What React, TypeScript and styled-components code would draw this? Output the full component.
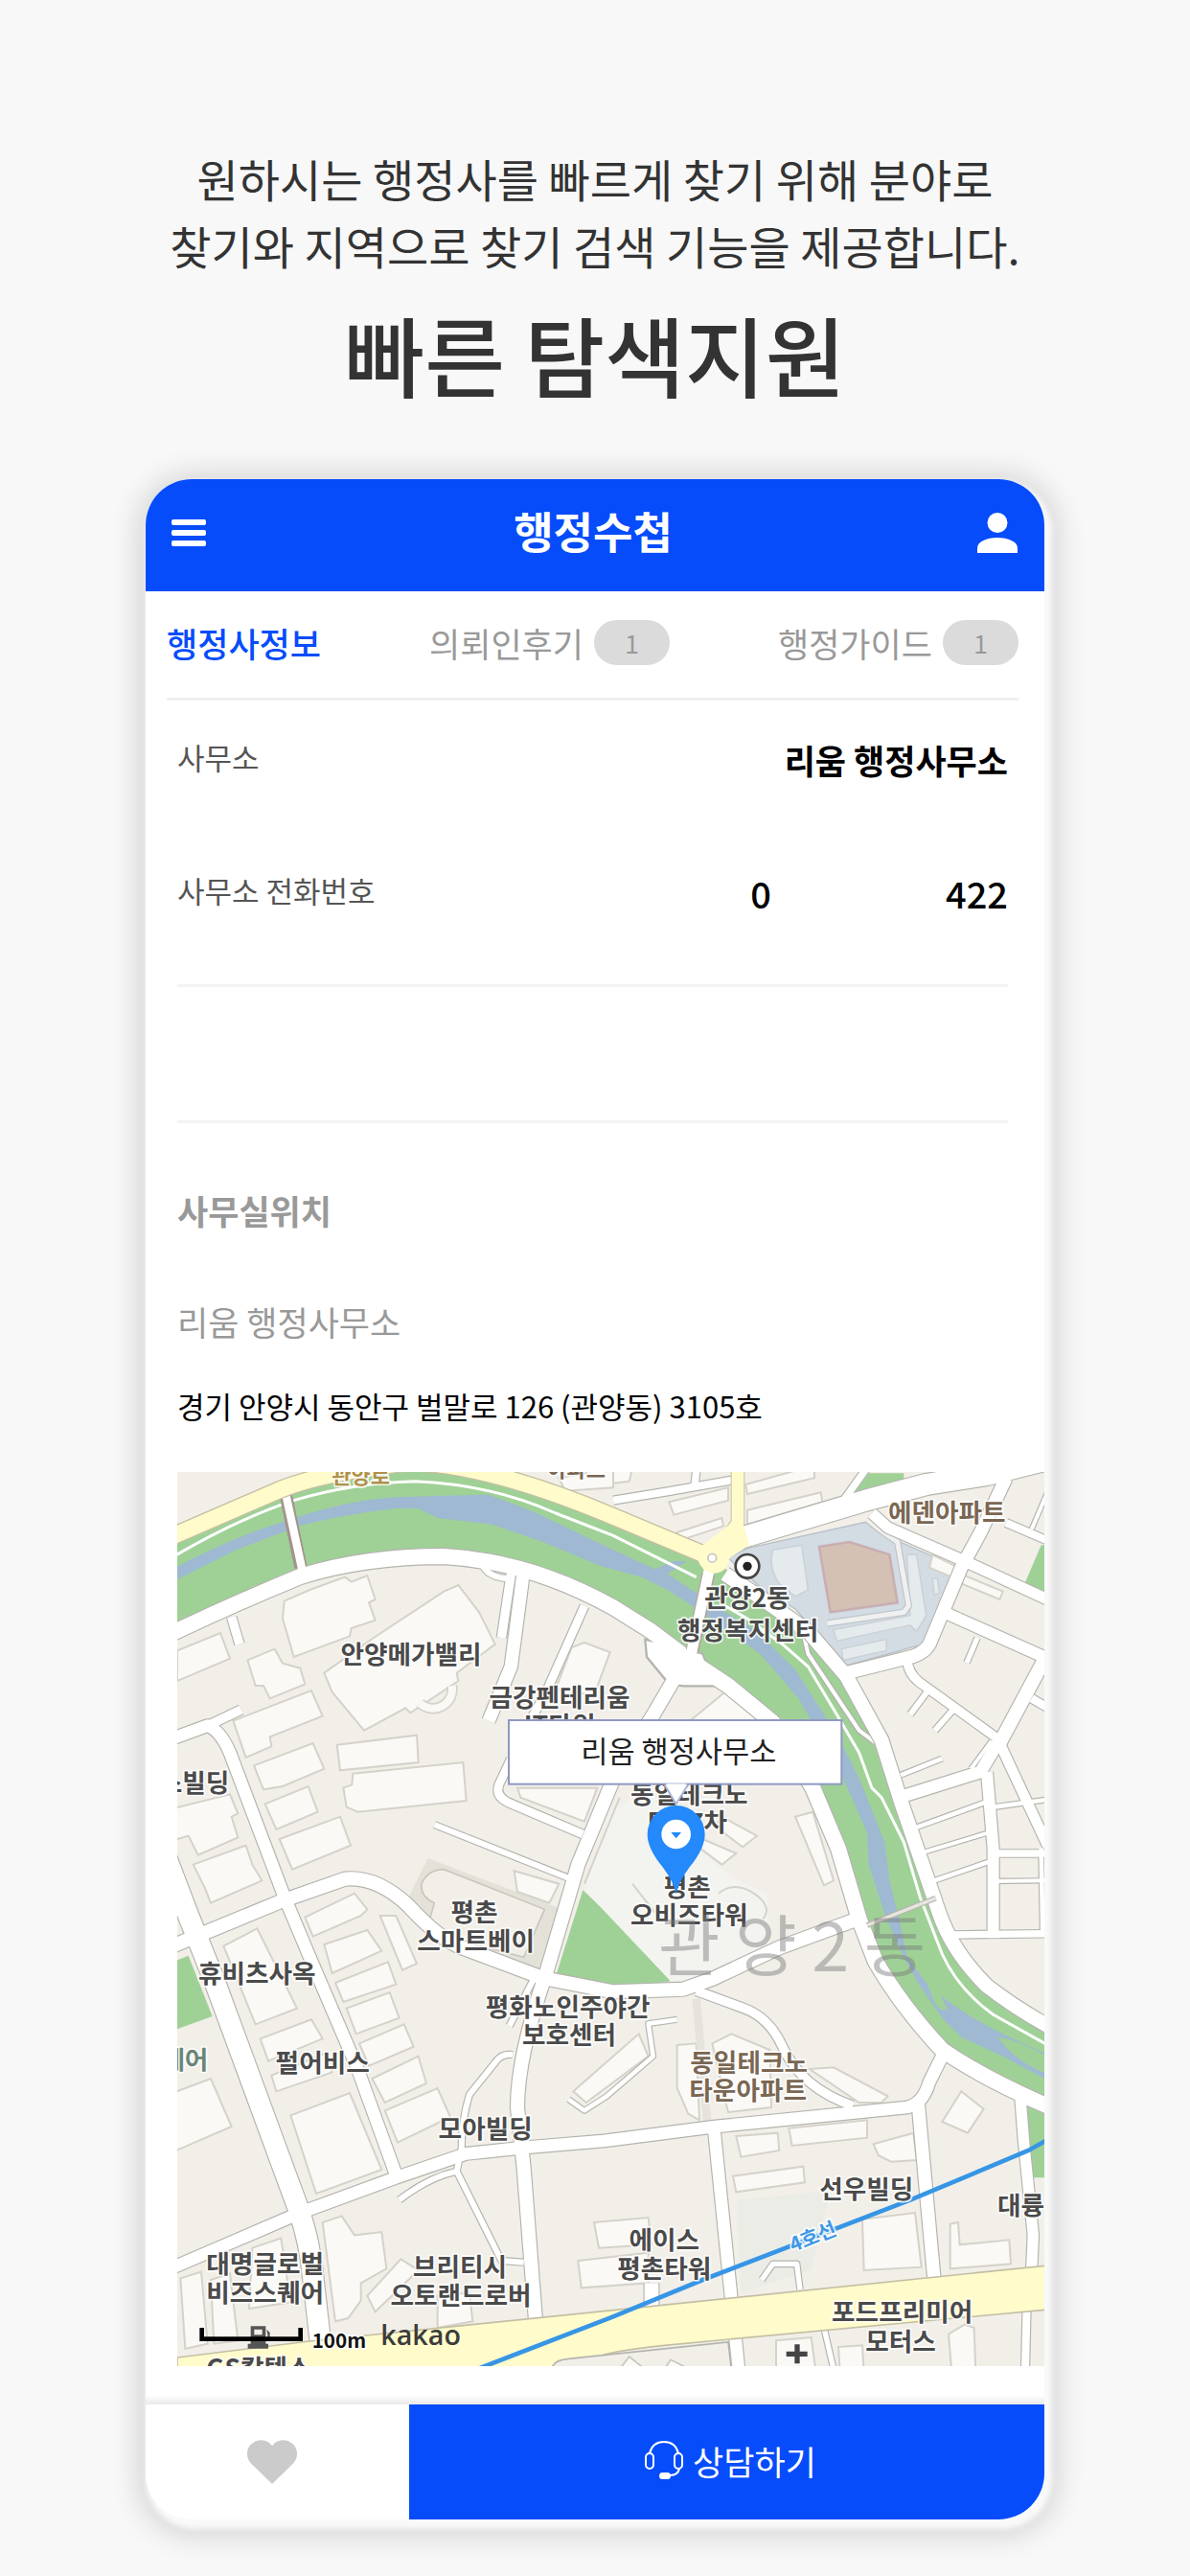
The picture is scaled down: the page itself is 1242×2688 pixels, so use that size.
import React from 'react';
import styled, { createGlobalStyle, css } from 'styled-components';

const BLUE = '#064cfb';
const FONT = `'Noto Sans CJK KR', 'Noto Sans', sans-serif`;

const GlobalStyle = createGlobalStyle`
  * { box-sizing: border-box; }
  body { margin: 0; background: #f8f8f8; font-family: ${FONT}; color: #000; }
  h1, h2, h3, p, dl, dd, dt { margin: 0; font-weight: 400; }
  button { border: 0; padding: 0; background: none; font: inherit; color: inherit; cursor: pointer; }
  a { color: inherit; text-decoration: none; }
`;

const Page = styled.div`
  display: flex;
  flex-direction: column;
  padding: 151px 152px 58px;
`;

const Intro = styled.header`
  display: flex;
  flex-direction: column;
  align-items: center;
  gap: 22px;
  margin: 0 -60px 77px;
  text-align: center;
  color: #333;
`;

const Lead = styled.p`
  font-size: 47px;
  line-height: 70px;
`;

const Headline = styled.h1`
  && { font-weight: 500; }
  font-size: 91px;
  line-height: 110px;
`;

const Phone = styled.main`
  display: flex;
  flex-direction: column;
  overflow: hidden;
  border-radius: 48px;
  background: #fff;
  box-shadow: 4px 6px 5px 4px #f9f9f9, 3px 6px 30px 12px rgba(0, 0, 0, 0.14);
`;

const TopBar = styled.header`
  display: flex;
  align-items: center;
  justify-content: space-between;
  height: 117px;
  padding: 0 25px 6px 21px;
  background: ${BLUE};
  color: #fff;
`;

const IconButton = styled.button`
  display: flex;
  align-items: center;
  justify-content: center;
  width: 48px;
  height: 56px;
`;

const BrandTitle = styled.h2`
  && { font-weight: 700; }
  padding-bottom: 4px;
  font-size: 45px;
  line-height: 64px;
`;

const Tabs = styled.nav`
  display: flex;
  align-items: center;
  justify-content: space-between;
  height: 114px;
  margin: 0 27px 0 22px;
  padding-bottom: 4px;
  border-bottom: 3px solid #f0f0f0;
`;

const Tab = styled.a<{ $active?: boolean }>`
  display: flex;
  align-items: center;
  gap: 11px;
  font-size: 35px;
  line-height: 48px;
  color: #999;
  ${p => p.$active && css`
    color: ${BLUE};
    font-weight: 500;
  `}
`;

const Badge = styled.span`
  display: flex;
  align-items: center;
  justify-content: center;
  width: 79px;
  height: 47px;
  border-radius: 24px;
  background: #dbdbdb;
  font-size: 27px;
`;

const Facts = styled.dl`
  display: flex;
  flex-direction: column;
  gap: 15px;
  margin: 0 38px 0 33px;
  padding-bottom: 33px;
  border-bottom: 3px solid #f3f3f3;
`;

const Fact = styled.div`
  display: flex;
  align-items: center;
  justify-content: space-between;
  height: 124px;
  line-height: 48px;
`;

const FactName = styled.dt`
  padding-bottom: 6px;
  font-size: 31px;
  color: #555;
`;

const FactValue = styled.dd`
  display: flex;
  gap: 182px;
  && { font-weight: 700; }
  font-size: 35px;
`;

const PhoneNumber = styled(FactValue)`
  && { font-weight: 500; }
  font-size: 38px;
`;

const EmptyBlock = styled.div`
  height: 142px;
  margin: 0 38px 0 33px;
  border-bottom: 3px solid #f3f3f3;
`;

const Place = styled.section`
  display: flex;
  flex-direction: column;
  padding: 67px 0 0 33px;
  line-height: 48px;
`;

const PlaceTitle = styled.h3`
  && { font-weight: 700; }
  margin-bottom: 68px;
  font-size: 35px;
  color: #999;
`;

const PlaceName = styled.p`
  margin-bottom: 40px;
  font-size: 35px;
  color: #999;
`;

const Address = styled.p`
  margin-bottom: 45px;
  font-size: 31px;
`;

const MapView = styled.svg`
  display: block;
  width: 100%;
  height: auto;
  background: #f2efe9;
  font-family: ${FONT};
`;

const ActionBar = styled.footer`
  display: grid;
  grid-template-columns: 275px 1fr;
  height: 130px;
  margin-top: 30px;
  padding-top: 10px;
  background: linear-gradient(#fff, #e9e9e9 10px, #fff 10px);
`;

const LikeButton = styled.button`
  display: flex;
  align-items: center;
  justify-content: center;
  padding-right: 12px;
`;

const ConsultButton = styled.button`
  && {
    display: flex;
    align-items: center;
    justify-content: center;
    gap: 10px;
    padding: 0 0 4px 8px;
    background: ${BLUE};
    color: #fff;
    font-size: 35px;
  }
`;

/* ---------- icons ---------- */

const MenuIcon = () => (
  <svg width="36" height="30" viewBox="0 0 36 30" fill="#fff">
    <rect y="1" width="36" height="6" rx="2" />
    <rect y="12" width="36" height="6" rx="2" />
    <rect y="23" width="36" height="6" rx="2" />
  </svg>
);

const UserIcon = () => (
  <svg width="42" height="42" viewBox="0 0 42 42" fill="#fff">
    <circle cx="21" cy="10.5" r="10.5" />
    <path d="M0 42v-5c0-7 10-11 21-11s21 4 21 11v5z" />
  </svg>
);

const HeartIcon = () => (
  <svg width="52" height="46" viewBox="0 0 52 46" fill="#cbcbcb">
    <path d="M26 46 4.500 25C-1.500 19-1.500 10 4 4.500S18-1 23 3l3 3 3-3C34-1 42.500-1 48 4.500S53.500 19 47.500 25z" />
  </svg>
);

const HeadsetIcon = () => (
  <svg width="40" height="40" viewBox="0 0 40 40" fill="none" stroke="#fff" strokeWidth="2" strokeLinecap="round">
    <path d="M5 13C7 5 12 1 20 1s13 4 15 12" />
    <rect x="1" y="13" width="8" height="16" rx="4" />
    <rect x="31" y="13" width="8" height="16" rx="4" />
    <path d="M36 29c-1 5-4 7-10 7" />
    <rect x="16" y="34" width="10" height="5" rx="2.500" fill="#fff" />
  </svg>
);

/* ---------- map data ---------- */

type Road = [path: string, width: number];

const roads: Road[] = [
  // ring road along the stream, south-west bank
  ['M0 525Q200 430 400 348Q600 285 850 285Q1120 300 1380 445L1500 520L1620 610L1740 690L1880 805L2005 1010L2085 1200L2150 1420L2200 1550Q2280 1690 2410 1830Q2540 1920 2750 2010', 48],
  // north-east bank
  ['M1730 340L1850 420L1990 520L2110 660L2220 860L2280 1050L2400 1400Q2440 1520 2550 1630Q2640 1700 2750 1760', 44],
  ['M1770 230L2070 140L2170 110L2360 60L2550 30L2750 -20', 66],
  ['M1380 110L1550 82L1760 45', 24],
  ['M1640 20L1635 65', 22],
  ['M2180 0L2080 140', 22],
  ['M2190 150L2240 195L2480 300L2750 425', 34],
  ['M2610 40L2530 210L2470 320L2370 560Q2350 595 2290 605L2110 650', 40],
  ['M2610 180L2750 240', 24],
  ['M2750 60L2690 200', 12],
  ['M2420 462L2740 605', 36],
  ['M2740 590L2590 870', 42],
  ['M2300 600Q2300 650 2340 680L2590 860', 28],
  ['M2520 540L2487 618', 16],
  ['M2362 710L2310 780', 18],
  ['M2442 768L2387 830', 18],
  ['M2590 860L2530 960L2290 1035', 38],
  ['M2565 862L2500 950', 12],
  ['M2280 970L2410 918', 14],
  ['M2550 960L2570 1200L2570 1480', 36],
  ['M2590 870L2660 1020L2740 1190', 32],
  ['M2325 1135L2545 1055', 14],
  ['M2350 1212L2555 1150', 12],
  ['M2380 1302L2560 1240', 14],
  ['M2570 1070L2750 1045', 14],
  ['M2570 1215L2750 1215', 22],
  ['M2570 1302L2740 1300', 12],
  ['M2720 1200L2725 1470', 14],
  ['M2440 1470L2750 1466', 22],
  ['M2690 730L2760 770', 26],
  // west side
  ['M-30 1200L50 1410L130 1610L395 2330Q430 2430 440 2540L465 2760', 64],
  ['M0 855L110 815Q150 830 180 900L350 1350L430 1540L580 1890L705 2235', 38],
  ['M110 815L215 765', 28],
  ['M0 1505L340 1365L540 1295Q640 1285 740 1380Q840 1490 920 1515L1160 1605L1380 1648L1600 1640L1690 1608L1900 1510L2160 1415', 42],
  ['M185 475L210 560', 28],
  ['M970 310Q985 350 1050 355', 18],
  ['M1060 340L1030 540', 28],
  ['M1098 340L1060 630L990 800', 40],
  ['M1290 440L1170 710L1120 800', 26],
  ['M1600 620L1500 790L1390 960L1270 1250L1170 1590Q1080 1850 1080 2010L1100 2200L1138 2690', 42],
  ['M1060 920L1022 1000Q1010 1035 1050 1055L1285 1155', 26],
  ['M820 1125L1240 1292', 18],
  ['M1130 1610L1055 1755', 18],
  ['M1065 1845Q1030 1840 1010 1870L930 1970Q905 2050 905 2140L890 2210L1030 2490L1100 2495', 18],
  ['M890 2210Q800 2230 710 2300', 18],
  ['M1240 1985L1290 2020L1360 1975L1505 1850L1490 1748L1580 1735', 14],
  // south side
  ['M0 2512L400 2340L700 2230L920 2155L1110 2135L1350 2115L1700 2070L2300 2010Q2350 2000 2370 1930L2410 1850', 38],
  ['M1640 1645L1790 1700Q1870 1730 1910 1820Q1970 1950 2130 2005', 28],
  ['M1695 2070L1750 2610L1775 2850', 38],
  ['M2335 2000L2385 2550', 40],
  ['M2655 1980L2665 2110L2695 2410L2690 2520', 34],
  ['M2675 2630L2670 2830', 24],
  ['M1500 2560L1500 2640', 44],
  ['M1965 2580L1955 2500L1880 2500L1845 2550', 16],
  ['M2040 2700L2070 2830', 16],
];

const buildings = [
  '350,425 430,390 540,350 560,365 610,345 635,420 615,430 635,485 560,510 555,535 380,600 345,480',
  '475,650 630,540 850,395 895,375 960,460 1010,560 890,650 895,675 745,775 730,760 600,830 500,710',
  '15,580 150,525 180,605 15,675',
  '235,610 320,575 345,620 400,635 415,685 305,730 285,690 260,690',
  '190,800 435,705 470,785 305,850 310,880 230,915',
  '255,940 440,870 475,950 345,1005 285,1015',
  '290,1060 425,1005 455,1085 325,1140',
  '335,1170 525,1100 558,1190 375,1265',
  '515,875 765,845 770,930 525,955',
  '565,965 910,930 920,1050 580,1085 545,1070 535,1010 562,1000',
  '0,1075 180,1030 205,1090 185,1100 205,1165 80,1220 50,1160 0,1175',
  '65,1250 230,1190 250,1250 280,1300 120,1370 100,1320',
  '1290,555 1370,585 1320,720 1200,700 1250,570',
  '1080,1010 1330,1010 1290,1115 1090,1040',
  '1070,1270 1210,1310 1180,1370 1080,1335',
  '415,1415 570,1340 610,1390 590,1410 440,1475',
  '475,1500 610,1455 655,1520 500,1590',
  '510,1620 675,1555 700,1625 535,1680',
  '545,1700 680,1650 710,1730 575,1780',
  '585,1810 725,1750 755,1820 615,1880',
  '625,1920 770,1850 795,1935 665,1995',
  '665,2020 830,1950 870,2040 705,2120',
  '160,1505 265,1450 390,1700 260,1750',
  '275,1795 435,1735 470,1795 300,1865',
  '310,1910 480,1840 500,1900 325,1960',
  '370,2035 555,1965 655,2205 450,2280',
  '0,1965 120,1920 185,2070 0,2150',
  '470,2370 530,2350 570,2410 655,2400 670,2515 590,2560 590,2615 550,2670 510,2680',
  '610,2600 715,2485 770,2520 635,2650',
  '25,2545 90,2525 110,2750 40,2765',
  '120,2550 180,2530 205,2740 130,2750',
  '250,2450 340,2420 370,2620 240,2640',
  '830,2600 930,2590 940,2680 830,2700',
  '1255,1960 1460,1780 1490,1850 1295,1995',
  '1320,2370 1490,2355 1500,2440 1335,2450',
  '1270,2490 1490,2465 1490,2560 1280,2575',
  '650,1410 700,1410 765,1560 720,1580',
  '1580,1815 1640,1810 1650,2050 1615,2030 1580,1950',
  '1690,1810 1750,1780 1870,1830 1875,2010 1740,2025',
  '1995,1890 2070,1885 2240,1975 2220,1995 2150,1995',
  '1930,2075 2175,2050 2175,2105 1940,2130',
  '1765,2100 1895,2090 1900,2145 1780,2165',
  '1755,2225 1975,2195 1980,2245 1765,2275',
  '2195,2125 2320,2090 2330,2175 2250,2180 2210,2160',
  '2470,1960 2540,2015 2490,2090 2410,2055',
  '2160,2360 2325,2340 2345,2510 2165,2520',
  '2435,2375 2460,2370 2465,2440 2620,2425 2625,2500 2435,2515',
  '1890,2740 2000,2730 2015,2840 1890,2840',
  '2085,2760 2160,2755 2165,2840 2090,2840',
  '2430,2720 2480,2690 2510,2700 2515,2840 2440,2840',
  '1555,115 1740,70 1740,110 1570,155',
  '1580,210 1720,165 1725,190 1590,235',
  '1795,60 2010,0 2010,40 1800,90',
  '1800,140 2030,85 2035,115 1800,185',
  '1430,50 1350,60 1350,20 1440,10',
  '1950,1100 2005,1085 2070,1300 2040,1315',
  '1720,1100 1830,1160 1785,1195 1700,1130',
  '1660,1170 1765,1215 1720,1250 1640,1190',
  '1620,800 1730,710 1850,800',
  '2380,280 2460,320 2440,350 2370,320',
  '2480,345 2600,395 2590,420 2470,370',
  '1210,40 1380,10 1380,70 1230,80',
];

type Label = {
  x: number;
  y: number;
  t: string;
  size?: number;
  fill?: string;
  anchor?: 'start' | 'middle' | 'end';
};
const BROWN = '#7a6753';

const labels: Label[] = [
  { x: 747, y: 590, t: '안양메가밸리' },
  { x: 1212, y: 727, t: '금강펜테리움' },
  { x: 1212, y: 812, t: 'IT타워' },
  { x: 178, y: 992, t: '스빌딩', anchor: 'end' },
  { x: 1800, y: 415, t: '관양2동' },
  { x: 1802, y: 515, t: '행정복지센터' },
  { x: 2425, y: 148, t: '에덴아파트', fill: BROWN },
  { x: 1265, y: 5, t: '아파트', fill: BROWN, size: 66 },
  { x: 1618, y: 1030, t: '동일테크노' },
  { x: 1612, y: 1115, t: 'BIZ7차' },
  { x: 945, y: 1398, t: '평촌' },
  { x: 950, y: 1488, t: '스마트베이' },
  { x: 1612, y: 1320, t: '평촌' },
  { x: 1618, y: 1408, t: '오비즈타워' },
  { x: 1238, y: 1695, t: '평화노인주야간' },
  { x: 1242, y: 1783, t: '보호센터' },
  { x: 265, y: 1590, t: '휴비츠사옥' },
  { x: 470, y: 1868, t: '펄어비스' },
  { x: 112, y: 1860, t: '퀘어', fill: '#6b8576', anchor: 'end' },
  { x: 980, y: 2075, t: '모아빌딩' },
  { x: 1805, y: 1868, t: '동일테크노', fill: BROWN },
  { x: 1802, y: 1957, t: '타운아파트', fill: BROWN },
  { x: 2173, y: 2265, t: '선우빌딩' },
  { x: 2583, y: 2315, t: '대륭', anchor: 'start' },
  { x: 1540, y: 2423, t: '에이스' },
  { x: 1540, y: 2515, t: '평촌타워' },
  { x: 900, y: 2508, t: '브리티시' },
  { x: 903, y: 2598, t: '오토랜드로버' },
  { x: 290, y: 2498, t: '대명글로벌' },
  { x: 290, y: 2590, t: '비즈스퀘어' },
  { x: 2285, y: 2650, t: '포드프리미어' },
  { x: 2280, y: 2742, t: '모터스' },
  { x: 270, y: 2826, t: 'GS칼텍스' },
];

const MapLabel = styled.text`
  font-weight: 700;
  stroke: #fff;
  stroke-width: 10px;
  stroke-opacity: 0.85;
  stroke-linejoin: round;
  paint-order: stroke;
`;

const OfficeMap = () => (
  <MapView viewBox="15 21 2715 2799" role="img" aria-label="리움 행정사무소 지도">
    {/* parks, stream and special areas */}
    <g fill="#9fd197">
      <path d="M0 220L340 75L500 20L750 -20L1040 20L1380 160L1690 290L1850 420L1990 520L2110 660L2220 860L2280 1050L2400 1400L2440 1510L2550 1630L2750 1760V2010L2410 1830L2200 1550L2085 1200L2005 1010L1870 800L1600 610L1380 450L1100 320L850 285L620 295L400 345L0 525Z" />
      <path d="M1285 1330L1200 1600L1380 1645L1560 1615L1370 1410Z" />
      <path d="M0 1555L50 1535L125 1725L0 1770Z" />
      <path d="M2670 1990H2750V2230H2690Z" />
      <path d="M2660 390L2720 250H2750V425Z" />
    </g>
    <g fill="#9eb9d1">
      <path d="M0 325Q200 220 340 180L400 160Q560 108 700 100L850 95L990 92L1130 145L1380 265L1510 325L1570 300L1610 300L1550 340L1640 400L1700 440L1830 520L1950 640L2040 780L2100 880L2150 980L2190 1080L2230 1180L2245 1300L2280 1440L2300 1540L2360 1620Q2440 1700 2600 1780L2750 1850V1930L2600 1850L2470 1790L2410 1730L2340 1630L2290 1540L2235 1420L2180 1250L2175 1150L2100 980L2030 850L1960 730L1840 590L1620 435L1550 390L1470 350L1340 315L1160 240L1000 185L830 165L770 135L700 135Q560 150 400 188L200 265L0 365Z" />
    </g>
    <path d="M2355 1600Q2400 1640 2425 1700Q2405 1715 2385 1680ZM2585 1790Q2660 1800 2750 1860V1910Q2640 1870 2585 1790Z" fill="#9fd197" />
    <path d="M1740 290L1800 260L2170 178L2210 210L2460 320L2430 400L2350 560L2100 630L2050 560L1950 450L1850 390Z" fill="#d3dbe3" stroke="#b9c0c7" strokeWidth="4" />
    <g fill="#e5eaed" stroke="#c9d0d6" strokeWidth="4">
      <path d="M1880 265L1970 250L1990 390L1950 410L1900 370Q1865 320 1880 265Z" />
      <path d="M2070 515L2310 470L2300 280L2330 280L2360 470L2330 520L2310 500L2080 550Z" />
      <path d="M2095 575L2235 545L2235 580L2100 610Z" />
      <path d="M2380 355L2395 355L2402 400L2385 405Z" />
    </g>
    <path d="M2220 205L2270 240L2305 440L2290 460L2050 495" fill="none" stroke="#bdc4ca" strokeWidth="22" />
    <path d="M2220 205L2270 240L2305 440L2290 460L2050 495" fill="none" stroke="#eff0ef" strokeWidth="15" />
    <path d="M2025 255L2120 240L2245 280L2270 430L2060 460Z" fill="#d5c1b3" stroke="#c9aeb2" strokeWidth="8" />
    <path d="M1765 2300L2060 2270L2000 2520L1780 2590Z" fill="#ecece7" />
    <path d="M1480 1010L1370 1090L1290 1330L1560 1615L1680 1600L1870 1500L1860 1340L1750 1290L1650 1200L1540 1060Z" fill="#f3f3f0" />
    <path d="M800 1230L1220 1390L1180 1600L830 1470L730 1370Z" fill="#e4e1d9" />
    <path d="M850 1265L1165 1390L1100 1540L870 1480L800 1440L820 1370Q775 1350 780 1310Q800 1265 850 1265Z" fill="#f2efe9" stroke="#c9c6be" strokeWidth="5" />
    <path d="M2130 90L2180 25H2290V58L2150 92Z" fill="#9fd197" />

    <g fill="#faf9f6" stroke="#d5d2ca" strokeWidth="6">
      {buildings.map(points => <polygon key={points} points={points} />)}
      <path d="M775 745A60 60 0 0 0 875 690" fill="none" strokeWidth="34" />
      <path d="M775 745A60 60 0 0 0 875 690" fill="none" stroke="#faf9f6" strokeWidth="24" />
      <path d="M1290 1310L1400 1040M1440 1310L1510 1400M1710 1340Q1760 1300 1820 1340T1850 1420" fill="none" />
    </g>

    {/* footpaths along the stream */}
    <g fill="none" stroke="#fff" strokeWidth="9">
      <path d="M0 288Q200 170 380 110Q560 55 760 50Q1000 60 1200 150L1380 220L1640 350" />
      <path d="M1730 440L1800 480L1910 560L1990 630L2080 780L2150 900L2190 1010L2220 1040L2290 1180L2340 1350L2410 1530Q2460 1640 2570 1720L2750 1820" />
    </g>
    <path d="M1970 500L1990 590L2050 680L2150 830L2210 875" fill="none" stroke="#b3b3ab" strokeWidth="20" />
    <path d="M1970 500L1990 590L2050 680L2150 830L2210 875" fill="none" stroke="#fff" strokeWidth="12" />
    <path d="M1640 1670L1675 2060" fill="none" stroke="#e6e3dc" strokeWidth="26" />

    {/* roads: outlines first, then surfaces, so crossings merge */}
    <g fill="none" stroke="#b4b4ae" strokeLinejoin="round">
      {roads.map(([d, w]) => <path key={d} d={d} strokeWidth={w + 7} />)}
    </g>
    <path d="M1480 545L1485 600L1555 685L1600 691H1700L1660 590Z" fill="#fff" stroke="#b4b4ae" strokeWidth="7" />
    <g fill="none" stroke="#fff" strokeLinejoin="round">
      {roads.map(([d, w]) => <path key={d} d={d} strokeWidth={w} />)}
    </g>
    <path d="M2175 1440L2390 1355" stroke="#b4b4ae" strokeWidth="17" />
    <path d="M2175 1440L2390 1355" stroke="#e6e6df" strokeWidth="10" />

    {/* bridges */}
    <g fill="none">
      <path d="M350 70L402 320" stroke="#a3948c" strokeWidth="40" />
      <path d="M346 50L410 345" stroke="#fff" strokeWidth="25" />
      <path d="M1678 340L1628 580" stroke="#b3a49c" strokeWidth="42" />
      <path d="M1682 320L1622 600" stroke="#fff" strokeWidth="33" />
    </g>

    {/* arterial roads */}
    <g fill="none" stroke="#c4bfa4">
      <path d="M0 222L340 75Q480 20 750 -10Q1000 0 1380 160L1690 290" strokeWidth="58" />
      <path d="M1770 0L1770 180L1690 290" strokeWidth="44" />
    </g>
    <path d="M15 2793L430 2742L1380 2645L2740 2505V2643L1540 2755Q1400 2770 1350 2785L1190 2840H15Z" fill="#fffbcb" stroke="#c4bfa4" strokeWidth="5" />
    <path d="M1190 2820Q1200 2800 1240 2797L1740 2745L1750 2830H1190Z" fill="#f2efe9" stroke="#b4b4ae" strokeWidth="5" />
    <path d="M1400 2830L1430 2790L1480 2830L1540 2830L1560 2800L1620 2830" fill="#faf9f6" stroke="#c9c6be" strokeWidth="5" />
    <g fill="none" stroke="#fffbcb">
      <path d="M0 222L340 75Q480 20 750 -10Q1000 0 1380 160L1690 290" strokeWidth="50" />
      <path d="M1770 0L1770 180L1690 290" strokeWidth="38" />
    </g>
    <path d="M1745 185L1790 190L1805 250L1745 290Q1735 340 1690 338Q1645 330 1640 265Z" fill="#fffbcb" />
    <circle cx="1690" cy="290" r="13" fill="#fff" stroke="#c6c6c0" strokeWidth="5" />

    {/* subway line */}
    <path d="M940 2835L1380 2665L1660 2550L2310 2300L2680 2145L2760 2100" fill="none" stroke="#3795e5" strokeWidth="14" />

    {labels.map(l => (
      <MapLabel key={`${l.t}-${l.y}`} x={l.x} y={l.y + 30} textAnchor={l.anchor ?? 'middle'} fontSize={l.size ?? 80} fill={l.fill ?? '#4a4a4a'}>
        {l.t}
      </MapLabel>
    ))}
    <MapLabel x="590" y="56" textAnchor="middle" fontSize="66" fill="#b0914a">관양로</MapLabel>
    <MapLabel x="2005" y="2437" textAnchor="middle" fontSize="62" fill="#3f98e6" transform="rotate(-22 2005 2415)">4호선</MapLabel>

    {/* district name */}
    <text x="1940" y="1584" textAnchor="middle" fontSize="210" fontWeight="400" fill="#777" fillOpacity="0.45">관 양 2 동</text>

    {/* points of interest */}
    <circle cx="1800" cy="316" r="37" fill="#fff" stroke="#444" strokeWidth="8" />
    <circle cx="1800" cy="316" r="14" fill="#222" />
    <path d="M1948 2752H1964V2774H1988V2790H1964V2812H1948V2790H1922V2774H1948Z" fill="#444" />
    <path d="M245 2695H292V2750H300V2765H236V2750H245ZM256 2705V2722H281V2705ZM295 2705L305 2715V2740H298V2722" fill="#555" />

    {/* scale and provider */}
    <path d="M92 2700V2735H401V2700" fill="none" stroke="#000" strokeWidth="14" />
    <MapLabel x="437" y="2764" fontSize="62" fill="#111">100m</MapLabel>
    <text x="652" y="2754" fontSize="86" fontFamily="'Open Sans', 'Noto Sans', sans-serif" fontWeight="600" fill="#3c3c3c">kakao</text>

    {/* marker */}
    <path d="M1577 1342Q1570 1305 1535 1258Q1487 1200 1487 1155A90 90 0 0 1 1667 1155Q1667 1200 1619 1258Q1584 1305 1577 1342Z" fill="#2489fb" />
    <circle cx="1577" cy="1155" r="46" fill="#fff" />
    <path d="M1561 1149H1593L1577 1168Z" fill="#2489fb" />

    {/* info window */}
    <path d="M1540 998L1577 1060L1615 998" fill="#fff" stroke="#aeb6d6" strokeWidth="6" />
    <rect x="1053" y="798" width="1042" height="200" fill="#fff" stroke="#8f99c4" strokeWidth="6" />
    <path d="M1546 1001H1609" stroke="#fff" strokeWidth="8" />
    <text x="1585" y="930" textAnchor="middle" fontSize="92" fill="#222">리움 행정사무소</text>
  </MapView>
);

export default function App() {
  return (
    <>
      <GlobalStyle />
      <Page>
        <Intro>
          <Lead>
            원하시는 행정사를 빠르게 찾기 위해 분야로<br />
            찾기와 지역으로 찾기 검색 기능을 제공합니다.
          </Lead>
          <Headline>빠른 탐색지원</Headline>
        </Intro>

        <Phone>
          <TopBar>
            <IconButton aria-label="메뉴"><MenuIcon /></IconButton>
            <BrandTitle>행정수첩</BrandTitle>
            <IconButton aria-label="내 정보"><UserIcon /></IconButton>
          </TopBar>

          <Tabs>
            <Tab href="#info" $active>행정사정보</Tab>
            <Tab href="#reviews">의뢰인후기<Badge>1</Badge></Tab>
            <Tab href="#guide">행정가이드<Badge>1</Badge></Tab>
          </Tabs>

          <Facts>
            <Fact>
              <FactName>사무소</FactName>
              <FactValue>리움 행정사무소</FactValue>
            </Fact>
            <Fact>
              <FactName>사무소 전화번호</FactName>
              <PhoneNumber><span>0</span><span>422</span></PhoneNumber>
            </Fact>
          </Facts>
          <EmptyBlock />

          <Place>
            <PlaceTitle>사무실위치</PlaceTitle>
            <PlaceName>리움 행정사무소</PlaceName>
            <Address>경기 안양시 동안구 벌말로 126 (관양동) 3105호</Address>
            <OfficeMap />
          </Place>

          <ActionBar>
            <LikeButton aria-label="찜하기"><HeartIcon /></LikeButton>
            <ConsultButton><HeadsetIcon />상담하기</ConsultButton>
          </ActionBar>
        </Phone>
      </Page>
    </>
  );
}
